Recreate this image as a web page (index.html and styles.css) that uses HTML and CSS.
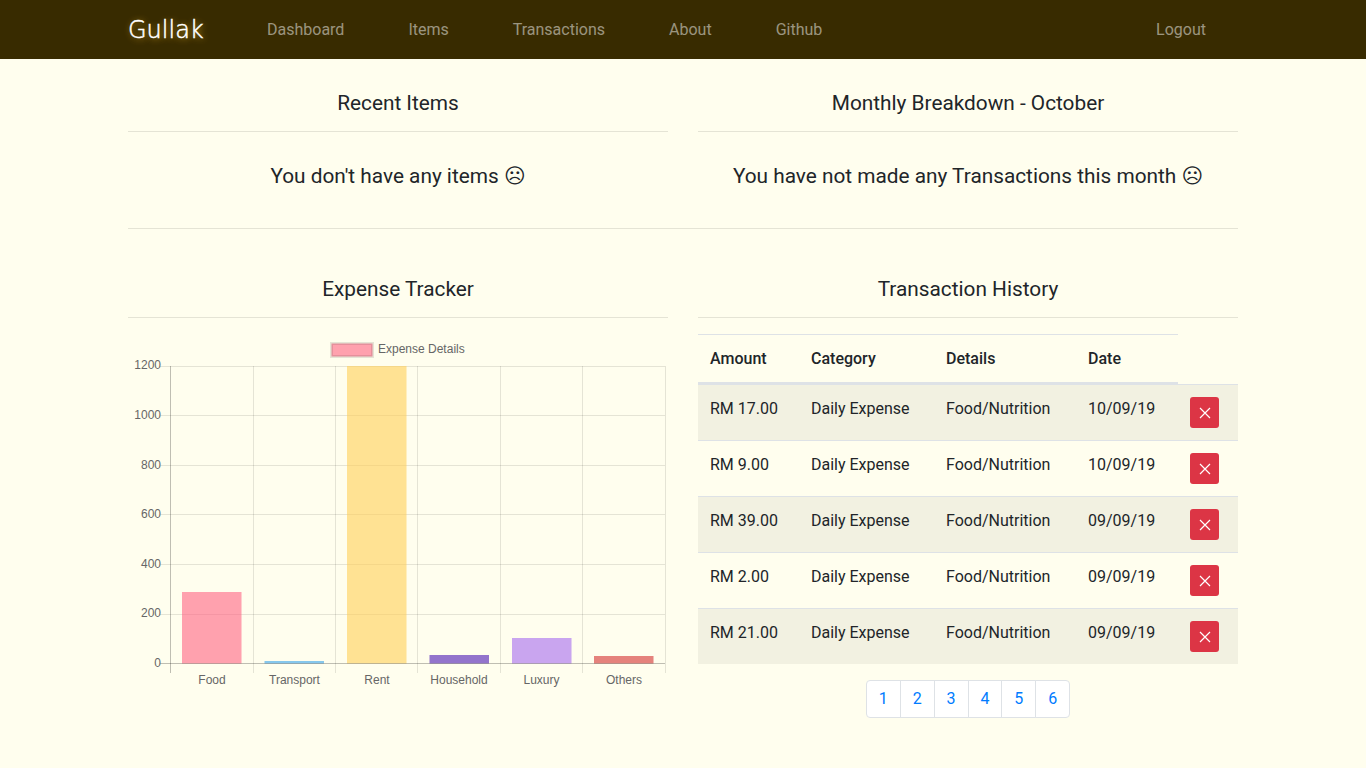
FILE: index.html
```html
<!DOCTYPE html>
<html lang="en">
<head>
<meta charset="utf-8">
<title>Gullak</title>
<link rel="stylesheet" href="styles.css">
</head>
<body>
<nav class="navbar">
  <div class="nav-inner">
    <a class="brand">Gullak</a>
    <ul class="nav-links">
      <li>Dashboard</li>
      <li>Items</li>
      <li>Transactions</li>
      <li>About</li>
      <li>Github</li>
    </ul>
    <a class="logout">Logout</a>
  </div>
</nav>
<main class="container">
  <section class="row row-top">
    <div class="col">
      <h4 class="title">Recent Items</h4>
      <hr class="rule">
      <h4 class="empty">You don't have any items <span class="sad">&#x2639;&#xFE0E;</span></h4>
    </div>
    <div class="col">
      <h4 class="title">Monthly Breakdown - October</h4>
      <hr class="rule">
      <h4 class="empty">You have not made any Transactions this month <span class="sad">&#x2639;&#xFE0E;</span></h4>
    </div>
  </section>
  <hr class="rule row-rule">
  <section class="row row-bottom">
    <div class="col">
      <h4 class="title">Expense Tracker</h4>
      <hr class="rule">
      <svg class="chart" width="540" height="370" viewBox="128 333 540 370" xmlns="http://www.w3.org/2000/svg">
        <g class="legend">
          <rect x="331.5" y="343.5" width="41" height="13" class="legend-box"/>
          <text x="378" y="353" class="lbl">Expense Details</text>
        </g>
        <g class="grid">
          <path d="M160 366.5H665M160 415.5H665M160 465.5H665M160 514.5H665M160 564.5H665M160 614.5H665"/>
          <path d="M253.5 366V673M335.5 366V673M417.5 366V673M500.5 366V673M582.5 366V673M665.5 366V673"/>
        </g>
        <rect x="182" y="592" width="59.500" height="71.500" fill="rgba(255,99,132,.6)"/>
        <rect x="264.500" y="661" width="59.500" height="2.500" fill="rgba(54,162,235,.6)"/>
        <rect x="347" y="366" width="59.500" height="297.500" fill="rgba(255,206,86,.6)"/>
        <rect x="429.500" y="655" width="59.500" height="8.500" fill="rgba(75,23,181,.6)"/>
        <rect x="512" y="638" width="59.500" height="25.500" fill="rgba(165,105,240,.6)"/>
        <rect x="594" y="656" width="59.500" height="7.500" fill="rgba(212,47,48,.6)"/>
        <g class="axis">
          <path d="M170.500 366V673"/>
          <path d="M160 663.500H665"/>
        </g>
        <g class="lbl y-labels">
          <text x="161" y="369">1200</text>
          <text x="161" y="419">1000</text>
          <text x="161" y="469">800</text>
          <text x="161" y="518">600</text>
          <text x="161" y="568">400</text>
          <text x="161" y="617">200</text>
          <text x="161" y="667">0</text>
        </g>
        <g class="lbl x-labels">
          <text x="212" y="684">Food</text>
          <text x="294.500" y="684">Transport</text>
          <text x="377" y="684">Rent</text>
          <text x="459" y="684">Household</text>
          <text x="541.500" y="684">Luxury</text>
          <text x="624" y="684">Others</text>
        </g>
      </svg>
    </div>
    <div class="col">
      <h4 class="title">Transaction History</h4>
      <hr class="rule">
      <table class="table">
        <thead>
          <tr><th class="c1">Amount</th><th class="c2">Category</th><th class="c3">Details</th><th class="c4">Date</th></tr>
        </thead>
        <tbody>
          <tr><td>RM 17.00</td><td>Daily Expense</td><td>Food/Nutrition</td><td>10/09/19</td><td><button class="del"><svg width="12" height="12" viewBox="0 0 12 12"><path d="M1 1L11 11M11 1L1 11"/></svg></button></td></tr>
          <tr><td>RM 9.00</td><td>Daily Expense</td><td>Food/Nutrition</td><td>10/09/19</td><td><button class="del"><svg width="12" height="12" viewBox="0 0 12 12"><path d="M1 1L11 11M11 1L1 11"/></svg></button></td></tr>
          <tr><td>RM 39.00</td><td>Daily Expense</td><td>Food/Nutrition</td><td>09/09/19</td><td><button class="del"><svg width="12" height="12" viewBox="0 0 12 12"><path d="M1 1L11 11M11 1L1 11"/></svg></button></td></tr>
          <tr><td>RM 2.00</td><td>Daily Expense</td><td>Food/Nutrition</td><td>09/09/19</td><td><button class="del"><svg width="12" height="12" viewBox="0 0 12 12"><path d="M1 1L11 11M11 1L1 11"/></svg></button></td></tr>
          <tr><td>RM 21.00</td><td>Daily Expense</td><td>Food/Nutrition</td><td>09/09/19</td><td><button class="del"><svg width="12" height="12" viewBox="0 0 12 12"><path d="M1 1L11 11M11 1L1 11"/></svg></button></td></tr>
        </tbody>
      </table>
      <ul class="pagination">
        <li>1</li><li>2</li><li>3</li><li>4</li><li>5</li><li>6</li>
      </ul>
    </div>
  </section>
</main>
</body>
</html>
```
FILE: styles.css
```css
* { box-sizing: border-box; }
html, body { margin: 0; padding: 0; }
body {
  background: #fffeee;
  color: #212529;
  font-family: Roboto, "DejaVu Sans", sans-serif;
  font-size: 16px;
  line-height: 1.5;
  min-height: 768px;
}
.navbar { background: #382b00; height: 59px; }
.nav-inner {
  width: 1110px;
  margin: 0 auto;
  height: 59px;
  display: flex;
  align-items: center;
}
.brand {
  width: 139px;
  color: #fff;
  font-family: "DejaVu Sans", sans-serif;
  font-weight: 200;
  font-size: 24px;
  line-height: 30px;
  -webkit-text-stroke: 0.5px #fff;
  text-shadow: 1px 1px 6px #d9a520;
}
.nav-links {
  display: flex;
  gap: 64px;
  list-style: none;
  margin: 0;
  padding: 0;
  flex: 1;
  color: rgba(255,255,255,.5);
}
.logout { color: rgba(255,255,255,.5); margin-right: 32px; }
.container { width: 1110px; margin: 0 auto; }
.row { display: flex; gap: 30px; }
.col { width: 540px; }
.title {
  margin: 0;
  padding-top: 30px;
  font-size: 20.8px;
  font-weight: 400;
  line-height: 28px;
  text-align: center;
}
.rule { border: 0; border-top: 1px solid rgba(0,0,0,.1); margin: 14px 0 0; }
.empty {
  margin: 0;
  padding-top: 29px;
  font-size: 20.8px;
  font-weight: 400;
  line-height: 31px;
  text-align: center;
}
.sad { font-family: "DejaVu Sans", sans-serif; font-variant-emoji: text; }
.row-top { height: 169px; }
.row-rule { margin: 0; }
.row-bottom { padding-top: 16px; }
.chart { display: block; margin-top: 15px; }
.chart text { font-family: "Liberation Sans", Arial, sans-serif; }
.lbl { font-size: 12px; fill: #666; }
.y-labels text { text-anchor: end; }
.x-labels text { text-anchor: middle; }
.grid path { stroke: rgba(0,0,0,.1); fill: none; }
.axis path { stroke: rgba(0,0,0,.25); fill: none; }
.legend-box { fill: rgba(255,99,132,.6); stroke: rgba(0,0,0,.1); stroke-width: 3; }
.table { width: 540px; border-collapse: separate; border-spacing: 0; margin-top: 16px; table-layout: fixed; }
.table th { border-top: 1px solid #dee2e6; border-bottom: 2px solid #dee2e6; padding: 12px 12px 11px; text-align: left; font-weight: 500; height: 50px; }
.c1 { width: 101px; }
.c2 { width: 135px; }
.c3 { width: 142px; }
.c4 { width: 102px; }
.table td { border-top: 1px solid #dee2e6; padding: 12px; vertical-align: top; }
.table tbody tr:nth-child(odd) { background: rgba(0,0,0,.05); }
.del {
  display: flex;
  align-items: center;
  justify-content: center;
  width: 29px;
  height: 31px;
  padding: 0;
  border: 0;
  border-radius: 3px;
  background: #dc3545;
}
.del path { stroke: #fff; stroke-width: 1.2; fill: none; }
.pagination {
  display: flex;
  justify-content: center;
  list-style: none;
  margin: 16px 0 0;
  padding: 0;
}
.pagination li {
  width: 34.9px;
  height: 38px;
  margin-left: -1px;
  background: #fff;
  border: 1px solid #dee2e6;
  color: #007bff;
  text-align: center;
  line-height: 36px;
}
.pagination li:first-child { margin-left: 0; border-radius: 4px 0 0 4px; }
.pagination li:last-child { border-radius: 0 4px 4px 0; }
```
